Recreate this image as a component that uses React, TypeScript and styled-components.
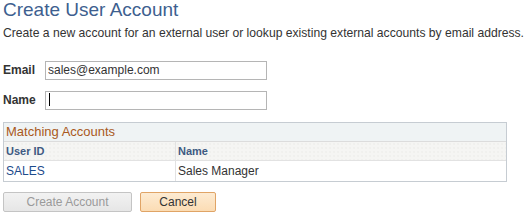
import React from 'react'
import styled, {createGlobalStyle} from 'styled-components'

const GlobalStyle = createGlobalStyle`
  body {
    margin: 0;
    background: #ffffff;
    font-family: Arial, "Liberation Sans", sans-serif;
  }
`

const Page = styled.div`
  padding: 0 3px;
  width: 520px;
`

const Title = styled.h1`
  margin: 0;
  font-size: 19px;
  line-height: 20px;
  font-weight: normal;
  color: #3e5f8f;
`

const Intro = styled.p`
  margin: 6px 0 0;
  font-size: 12.15px;
  line-height: 14px;
  color: #333333;
  white-space: nowrap;
`

const Form = styled.div`
  margin-top: 20px;
  display: flex;
  flex-direction: column;
  gap: 11px;
`

const Row = styled.div`
  display: flex;
  align-items: center;
  height: 19px;
`

const Label = styled.label`
  width: 42px;
  font-size: 12px;
  font-weight: bold;
  color: #333333;
`

const Field = styled.div`
  position: relative;
  width: 222px;
  height: 19px;
`

const Input = styled.input`
  box-sizing: border-box;
  width: 100%;
  height: 100%;
  margin: 0;
  padding: 0 2px;
  border: 1px solid #b5b5b5;
  font-family: Arial, "Liberation Sans", sans-serif;
  font-size: 12px;
  color: #333333;
  outline: none;
`

const Caret = styled.span`
  position: absolute;
  left: 4px;
  top: 3px;
  width: 1px;
  height: 13px;
  background: #000000;
`

const Grid = styled.div`
  margin-top: 13px;
  width: 502px;
  border: 1px solid #c6ccd2;
`

const GridTitle = styled.div`
  height: 18px;
  padding-left: 2px;
  background: #eff3f4;
  font-size: 13px;
  line-height: 18px;
  color: #a9591c;
`

const Cols = styled.div<{$head?: boolean}>`
  display: grid;
  grid-template-columns: 171px 1fr;
  height: ${p => (p.$head ? '18px' : '20px')};
  border-top: ${p => (p.$head ? '1px solid #dcdcdc' : '1px solid #e2e2e2')};
  background: ${p =>
    p.$head
      ? 'radial-gradient(circle, #e9e9e6 0.6px, transparent 0.8px) 0 0 / 4px 4px, #f5f5f3'
      : '#ffffff'};
`

const Cell = styled.div<{$head?: boolean; $link?: boolean}>`
  padding-left: 2px;
  border-left: 1px solid #e2e2e2;
  font-size: ${p => (p.$head ? '11px' : '12px')};
  font-weight: ${p => (p.$head ? 'bold' : 'normal')};
  line-height: ${p => (p.$head ? '18px' : '20px')};
  color: ${p => (p.$head ? '#3e5a82' : p.$link ? '#1d4b8c' : '#333333')};
  &:first-child {
    border-left: none;
  }
`

const Buttons = styled.div`
  margin-top: 10px;
  display: flex;
  gap: 8px;
`

const Button = styled.button<{$primary?: boolean; $w: number}>`
  box-sizing: border-box;
  width: ${p => p.$w}px;
  height: 20px;
  padding: 0;
  border-radius: 2px;
  font-family: Arial, "Liberation Sans", sans-serif;
  font-size: 12px;
  border: 1px solid ${p => (p.$primary ? '#e0a466' : '#c4c4c4')};
  color: ${p => (p.$primary ? '#333333' : '#9a9a9a')};
  background: ${p =>
    p.$primary
      ? 'linear-gradient(#fdebd2, #fbdcb4)'
      : 'linear-gradient(#f2f2f2, #e6e6e6)'};
`

const App = () => {
  return (
    <Page>
      <GlobalStyle />
      <Title>Create User Account</Title>
      <Intro>
        Create a new account for an external user or lookup existing external accounts by email address.
      </Intro>
      <Form>
        <Row>
          <Label htmlFor="email">Email</Label>
          <Field>
            <Input id="email" defaultValue="sales@example.com" />
          </Field>
        </Row>
        <Row>
          <Label htmlFor="name">Name</Label>
          <Field>
            <Input id="name" />
            <Caret />
          </Field>
        </Row>
      </Form>
      <Grid>
        <GridTitle>Matching Accounts</GridTitle>
        <Cols $head>
          <Cell $head>User ID</Cell>
          <Cell $head>Name</Cell>
        </Cols>
        <Cols>
          <Cell $link>SALES</Cell>
          <Cell>Sales Manager</Cell>
        </Cols>
      </Grid>
      <Buttons>
        <Button $w={129} disabled>Create Account</Button>
        <Button $w={76} $primary>Cancel</Button>
      </Buttons>
    </Page>
  )
}

export default App
